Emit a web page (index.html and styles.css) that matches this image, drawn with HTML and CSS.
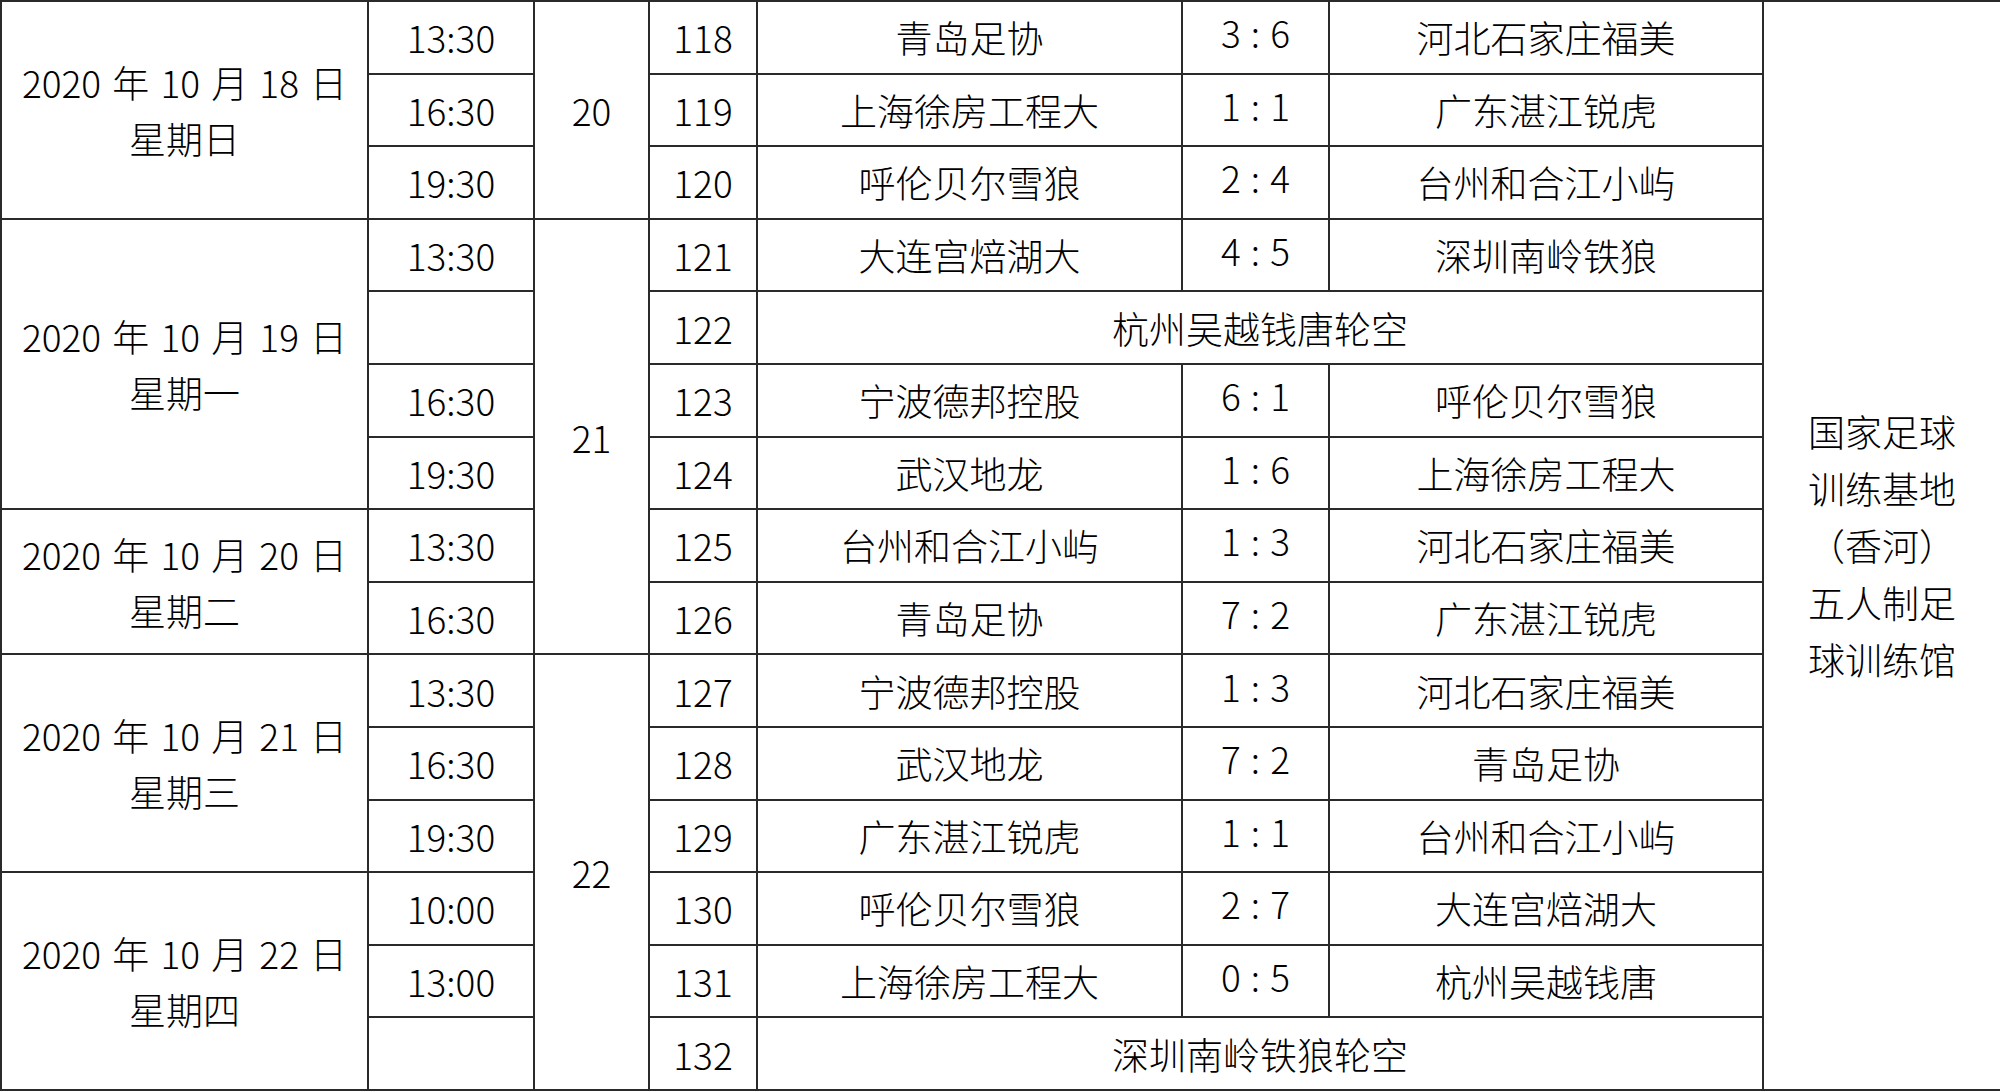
FILE: index.html
```html
<!DOCTYPE html>
<html lang="zh-CN">
<head>
<meta charset="utf-8">
<title>赛程</title>
<link rel="stylesheet" href="styles.css">
</head>
<body>
<table class="sched">
<colgroup>
<col class="c-date"><col class="c-time"><col class="c-round"><col class="c-no"><col class="c-team"><col class="c-score"><col class="c-team2"><col class="c-venue">
</colgroup>
<tbody>
<tr>
<td rowspan="3" class="date">2020 年 10 月 18 日<br>星期日</td>
<td>13:30</td>
<td rowspan="3">20</td>
<td>118</td><td>青岛足协</td><td class="score">3 : 6</td><td>河北石家庄福美</td>
<td rowspan="15" class="venue">国家足球<br>训练基地<br>（香河）<br>五人制足<br>球训练馆</td>
</tr>
<tr><td>16:30</td><td>119</td><td>上海徐房工程大</td><td class="score">1 : 1</td><td>广东湛江锐虎</td></tr>
<tr><td>19:30</td><td>120</td><td>呼伦贝尔雪狼</td><td class="score">2 : 4</td><td>台州和合江小屿</td></tr>
<tr>
<td rowspan="4" class="date">2020 年 10 月 19 日<br>星期一</td>
<td>13:30</td>
<td rowspan="6">21</td>
<td>121</td><td>大连宫焙湖大</td><td class="score">4 : 5</td><td>深圳南岭铁狼</td>
</tr>
<tr><td></td><td>122</td><td colspan="3">杭州吴越钱唐轮空</td></tr>
<tr><td>16:30</td><td>123</td><td>宁波德邦控股</td><td class="score">6 : 1</td><td>呼伦贝尔雪狼</td></tr>
<tr><td>19:30</td><td>124</td><td>武汉地龙</td><td class="score">1 : 6</td><td>上海徐房工程大</td></tr>
<tr>
<td rowspan="2" class="date">2020 年 10 月 20 日<br>星期二</td>
<td>13:30</td><td>125</td><td>台州和合江小屿</td><td class="score">1 : 3</td><td>河北石家庄福美</td>
</tr>
<tr><td>16:30</td><td>126</td><td>青岛足协</td><td class="score">7 : 2</td><td>广东湛江锐虎</td></tr>
<tr>
<td rowspan="3" class="date">2020 年 10 月 21 日<br>星期三</td>
<td>13:30</td>
<td rowspan="6">22</td>
<td>127</td><td>宁波德邦控股</td><td class="score">1 : 3</td><td>河北石家庄福美</td>
</tr>
<tr><td>16:30</td><td>128</td><td>武汉地龙</td><td class="score">7 : 2</td><td>青岛足协</td></tr>
<tr><td>19:30</td><td>129</td><td>广东湛江锐虎</td><td class="score">1 : 1</td><td>台州和合江小屿</td></tr>
<tr>
<td rowspan="3" class="date">2020 年 10 月 22 日<br>星期四</td>
<td>10:00</td><td>130</td><td>呼伦贝尔雪狼</td><td class="score">2 : 7</td><td>大连宫焙湖大</td>
</tr>
<tr><td>13:00</td><td>131</td><td>上海徐房工程大</td><td class="score">0 : 5</td><td>杭州吴越钱唐</td></tr>
<tr><td></td><td>132</td><td colspan="3">深圳南岭铁狼轮空</td></tr>
</tbody>
</table>
</body>
</html>
```

FILE: styles.css
```css
html, body {
  margin: 0;
  padding: 0;
  background: #ffffff;
}

.sched {
  width: 2000px;
  border-collapse: collapse;
  table-layout: fixed;
  font-family: "Noto Sans CJK SC", "Noto Sans", sans-serif;
  font-weight: 300;
  font-size: 37px;
  color: #000000;
}

.c-date { width: 367px; }
.c-time { width: 166px; }
.c-round { width: 115px; }
.c-no { width: 108px; }
.c-team { width: 425px; }
.c-score { width: 147px; }
.c-team2 { width: 434px; }
.c-venue { width: 238px; }

.sched tr {
  height: 72.6px;
}

.sched td {
  border: 2px solid #2a2a2a;
  padding: 0;
  text-align: center;
  vertical-align: middle;
  line-height: 44px;
  white-space: nowrap;
}

.sched td.date {
  line-height: 56px;
  word-spacing: 3px;
}

.sched td.venue {
  line-height: 57px;
}

.sched td.score {
  padding-bottom: 10px;
  word-spacing: 2px;
}
```
